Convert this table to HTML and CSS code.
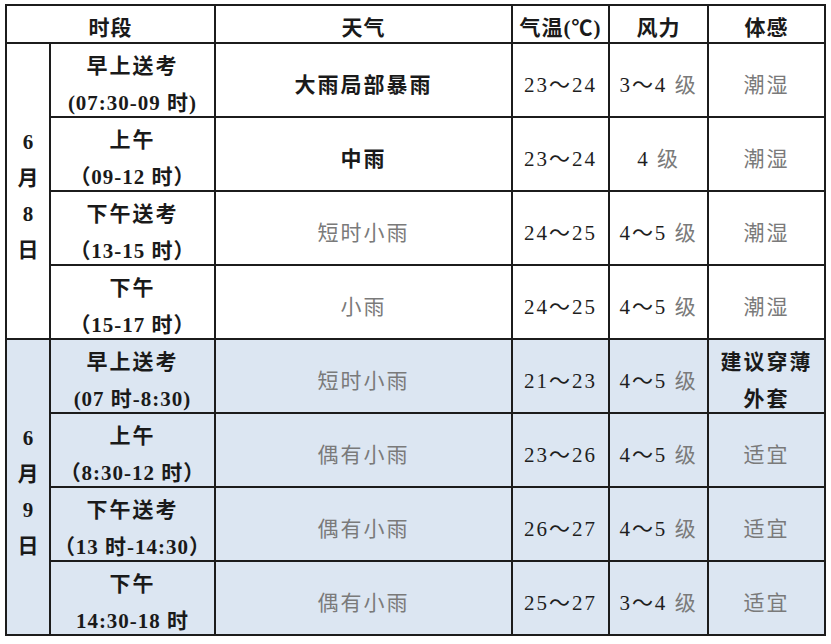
FILE: index.html
```html
<!DOCTYPE html>
<html lang="zh-CN">
<head>
<meta charset="utf-8">
<title>考试期间天气预报</title>
<link rel="stylesheet" href="styles.css">
</head>
<body>
<div class="sheet">
  <div class="cell head span2">时段</div>
  <div class="cell head">天气</div>
  <div class="cell head">气温(℃)</div>
  <div class="cell head">风力</div>
  <div class="cell head">体感</div>

  <div class="cell date"><span>6</span><span>月</span><span>8</span><span>日</span></div>
  <div class="cell period"><span class="cn">早上送考</span><span class="tm">(07:30-09 时)</span></div>
  <div class="cell strong">大雨局部暴雨</div>
  <div class="cell num">23～24</div>
  <div class="cell num"><span>3～4 <em>级</em></span></div>
  <div class="cell soft">潮湿</div>

  <div class="cell period"><span class="cn">上午</span><span class="tm">（09-12 时）</span></div>
  <div class="cell strong">中雨</div>
  <div class="cell num">23～24</div>
  <div class="cell num"><span>4 <em>级</em></span></div>
  <div class="cell soft">潮湿</div>

  <div class="cell period"><span class="cn">下午送考</span><span class="tm">（13-15 时）</span></div>
  <div class="cell soft">短时小雨</div>
  <div class="cell num">24～25</div>
  <div class="cell num"><span>4～5 <em>级</em></span></div>
  <div class="cell soft">潮湿</div>

  <div class="cell period"><span class="cn">下午</span><span class="tm">（15-17 时）</span></div>
  <div class="cell soft">小雨</div>
  <div class="cell num">24～25</div>
  <div class="cell num"><span>4～5 <em>级</em></span></div>
  <div class="cell soft">潮湿</div>

  <div class="cell date blue"><span>6</span><span>月</span><span>9</span><span>日</span></div>
  <div class="cell period blue"><span class="cn">早上送考</span><span class="tm">(07 时-8:30)</span></div>
  <div class="cell soft blue">短时小雨</div>
  <div class="cell num blue">21～23</div>
  <div class="cell num blue"><span>4～5 <em>级</em></span></div>
  <div class="cell strong blue"><span>建议穿薄</span><span>外套</span></div>

  <div class="cell period blue"><span class="cn">上午</span><span class="tm">（8:30-12 时）</span></div>
  <div class="cell soft blue">偶有小雨</div>
  <div class="cell num blue">23～26</div>
  <div class="cell num blue"><span>4～5 <em>级</em></span></div>
  <div class="cell soft blue">适宜</div>

  <div class="cell period blue"><span class="cn">下午送考</span><span class="tm">（13 时-14:30）</span></div>
  <div class="cell soft blue">偶有小雨</div>
  <div class="cell num blue">26～27</div>
  <div class="cell num blue"><span>4～5 <em>级</em></span></div>
  <div class="cell soft blue">适宜</div>

  <div class="cell period blue"><span class="cn">下午</span><span class="tm">14:30-18 时</span></div>
  <div class="cell soft blue">偶有小雨</div>
  <div class="cell num blue">25～27</div>
  <div class="cell num blue"><span>3～4 <em>级</em></span></div>
  <div class="cell soft blue">适宜</div>
</div>
</body>
</html>
```
FILE: styles.css
```css
html, body {
  margin: 0;
  padding: 0;
  background: #ffffff;
}

body {
  font-family: "Liberation Serif", "Noto Sans CJK SC", serif;
  font-size: 21px;
  color: #1a1a1a;
}

.sheet {
  display: grid;
  grid-template-columns: 42px 163px 295px 95px 97px 115px;
  grid-template-rows: 36px repeat(8, 72px);
  gap: 2px;
  padding: 2px;
  width: max-content;
  margin: 4px 0 0 5px;
  background: #1c1c1c;
}

.cell {
  background: #ffffff;
  display: flex;
  flex-direction: column;
  justify-content: center;
  align-items: center;
  text-align: center;
  padding-top: 10px;
  box-sizing: border-box;
  line-height: 37px;
  letter-spacing: 2px;
  white-space: nowrap;
  overflow: visible;
}

.cell.blue {
  background: #dce6f2;
}

.head {
  font-weight: 700;
  padding-top: 7px;
  line-height: 30px;
  letter-spacing: 1px;
}

.span2 {
  grid-column: span 2;
}

.date {
  grid-row: span 4;
  font-weight: 700;
  line-height: 36px;
  letter-spacing: 0;
}

.date span {
  display: block;
}

.period {
  font-weight: 700;
}

.period span {
  display: block;
}

.period .tm {
  letter-spacing: 1px;
}

.strong {
  font-weight: 700;
}

.strong span {
  display: block;
}

.soft {
  color: #7a7a7a;
}

.num {
  color: #1e1e1e;
}

.num em {
  font-style: normal;
  color: #7a7a7a;
}
```
